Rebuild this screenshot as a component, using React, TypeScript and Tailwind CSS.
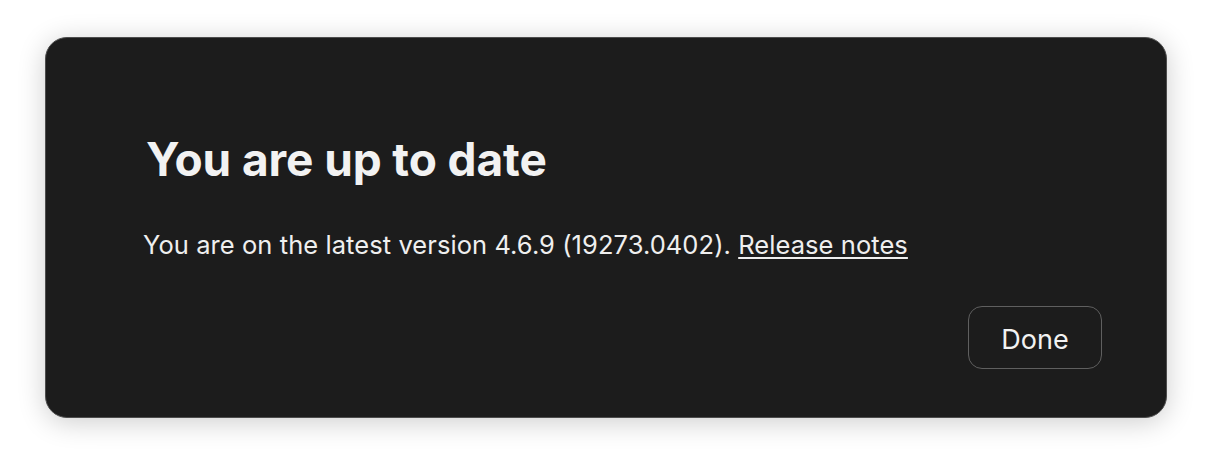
import React from "react";

export default function App() {
  return (
    <div className="w-[1212px] h-[472px] bg-white pt-[37px] pl-[45px]" style={{ fontFamily: "Inter, 'Noto Sans', sans-serif" }}>
      <div className="relative w-[1122px] h-[381px] rounded-[22px] border border-[#4d4d4d] bg-[#1c1c1c] shadow-[0_4px_28px_rgba(0,0,0,0.2)] flex flex-col">
        <div className="pl-[100px] pt-[93px]">
          <h1 className="text-[46px] leading-[56px] font-bold text-[#f2f2f2] tracking-[-0.1px]">You are up to date</h1>
        </div>
        <p className="pl-[97px] mt-[42px] text-[25.5px] leading-[32px] text-[#efefef] tracking-[0.07px]">
          You are on the latest version 4.6.9 (19273.0402).{" "}
          <span className="underline underline-offset-[3px]">Release notes</span>
        </p>
        <div className="flex justify-end pr-[64px] mt-[45px]">
          <button className="w-[134px] h-[63px] pt-[5px] rounded-[14px] border-[1.5px] border-[#5f5f5f] text-[27px] text-[#f2f2f2]">Done</button>
        </div>
      </div>
    </div>
  );
}
